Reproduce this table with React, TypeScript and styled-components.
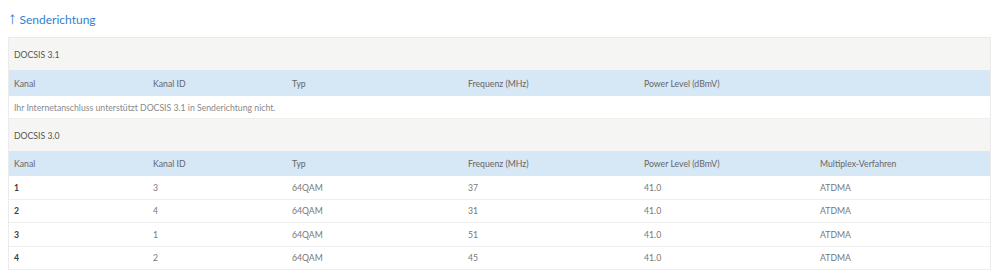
import React from "react";
import styled, { createGlobalStyle } from "styled-components";

const Global = createGlobalStyle`
  html, body { margin: 0; padding: 0; background: #ffffff; }
  body { padding: 8px; font-family: Lato, "Noto Sans", sans-serif; color: #6b6b6b; }
`;

const Title = styled.h2`
  margin: 0 0 7px 0;
  padding-top: 2px;
  height: 20px;
  line-height: 20px;
  font-size: 12px;
  font-weight: 400;
  color: #2f7fd3;
`;

const Arrow = styled.span`
  font-family: "Liberation Sans", sans-serif;
  font-size: 17px;
  line-height: 1;
  margin-right: 3px;
`;

const Table = styled.div`
  width: 983px;
  border: 1px solid #ebebeb;
  border-bottom: none;
  box-sizing: border-box;
`;

const COLS = "139px 139px 176px 176px 176px 1fr";

const GroupRow = styled.div`
  height: 32px;
  background: #f5f5f3;
  display: flex;
  align-items: center;
  padding-left: 5px;
  font-size: 8.7px;
  color: #555;
`;

const HeadRow = styled.div<{ $h: number }>`
  display: grid;
  grid-template-columns: ${COLS};
  height: ${(p) => p.$h}px;
  background: #d6e7f6;
  align-items: center;
  font-size: 8.7px;
  color: #666;
`;

const Row = styled.div`
  display: grid;
  grid-template-columns: ${COLS};
  height: 22.5px;
  border-bottom: 1px solid #efefef;
  align-items: center;
  font-size: 8.7px;
  color: #777;
`;

const Message = styled.div`
  height: 22px;
  border-bottom: 1px solid #efefef;
  display: flex;
  align-items: center;
  padding-left: 5px;
  font-size: 8.7px;
  color: #8a8a8a;
`;

const Cell = styled.div<{ $strong?: boolean }>`
  padding-left: 5px;
  color: ${(p) => (p.$strong ? "#3c3c3c" : "inherit")};
  font-weight: ${(p) => (p.$strong ? 700 : 400)};
  white-space: nowrap;
`;

const rows = [
  ["1", "3", "64QAM", "37", "41.0", "ATDMA"],
  ["2", "4", "64QAM", "31", "41.0", "ATDMA"],
  ["3", "1", "64QAM", "51", "41.0", "ATDMA"],
  ["4", "2", "64QAM", "45", "41.0", "ATDMA"],
];

export default function App() {
  const head = ["Kanal", "Kanal ID", "Typ", "Frequenz (MHz)", "Power Level (dBmV)"];
  return (
    <>
      <Global />
      <Title>
        <Arrow>↑</Arrow>Senderichtung
      </Title>
      <Table>
        <GroupRow>DOCSIS 3.1</GroupRow>
        <HeadRow $h={26}>
          {head.map((h) => (
            <Cell key={h}>{h}</Cell>
          ))}
        </HeadRow>
        <Message>Ihr Internetanschluss unterstützt DOCSIS 3.1 in Senderichtung nicht.</Message>
        <GroupRow>DOCSIS 3.0</GroupRow>
        <HeadRow $h={25}>
          {[...head, "Multiplex-Verfahren"].map((h) => (
            <Cell key={h}>{h}</Cell>
          ))}
        </HeadRow>
        {rows.map((r) => (
          <Row key={r[0]}>
            {r.map((c, i) => (
              <Cell key={i} $strong={i === 0}>
                {c}
              </Cell>
            ))}
          </Row>
        ))}
      </Table>
    </>
  );
}
